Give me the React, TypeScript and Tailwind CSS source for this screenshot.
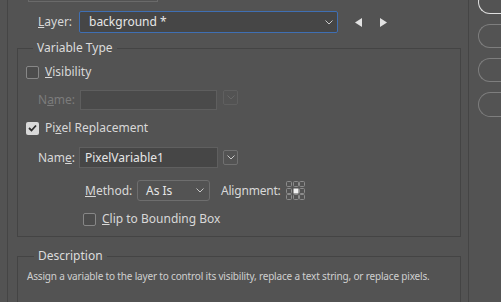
import React from "react";

const Chevron = ({ color = "#c8c8c8" }: { color?: string }) => (
  <svg width="8" height="5" viewBox="0 0 8 5" fill="none">
    <polyline points="0.5,0.5 4,4 7.5,0.5" stroke={color} strokeWidth="1" />
  </svg>
);

const CheckBox = ({ checked = false }: { checked?: boolean }) =>
  checked ? (
    <span className="flex h-[13px] w-[13px] items-center justify-center rounded-[2px] bg-[#d9d9d9]">
      <svg width="9" height="8" viewBox="0 0 9 8" fill="none">
        <polyline points="1,4 3.5,6.5 8,1.5" stroke="#2e2e2e" strokeWidth="1.8" />
      </svg>
    </span>
  ) : (
    <span className="h-[13px] w-[13px] rounded-[2px] border border-[#878787] bg-[#4c4c4c]" />
  );

const MiniDrop = ({ disabled = false }: { disabled?: boolean }) => (
  <span
    className={`flex h-[15px] w-[15px] items-center justify-center rounded-[2px] border ${
      disabled ? "border-[#5f5f5f]" : "border-[#707070]"
    }`}
  >
    <Chevron color={disabled ? "#666666" : "#c8c8c8"} />
  </span>
);

// 3x3 anchor picker, centre selected
const AlignIcon = () => (
  <svg width="19" height="19" viewBox="0 0 19 19" fill="none">
    {[0, 7, 13].map((x) =>
      [0, 7, 13].map((y) =>
        x === 7 && y === 7 ? (
          <rect key={`${x}-${y}`} x={x + 0.5} y={y + 0.5} width="5" height="5" fill="#f0f0f0" />
        ) : (
          <rect
            key={`${x}-${y}`}
            x={x + 0.5}
            y={y + 0.5}
            width="5"
            height="5"
            stroke="#8c8c8c"
            strokeWidth="1"
            rx="1"
          />
        )
      )
    )}
  </svg>
);

export default function App() {
  return (
    <div
      className="flex h-[302px] w-[501px] overflow-hidden bg-[#535353] text-[12px] text-[#d8d8d8]"
      style={{ fontFamily: '"Noto Sans", "Open Sans", sans-serif' }}
    >
      <div className="w-[7px] shrink-0" />
      <div className="flex w-[462px] shrink-0 flex-col border-x border-[#454545]">
        {/* stub of the control above */}
        <div className="ml-[20px] h-[2px] w-[130px] border-x border-b border-[#6a6a6a]" />

        {/* layer row */}
        <div className="mt-[9px] flex h-[22px] items-center">
          <span className="ml-[30px] w-[41px]">
            <u>L</u>ayer:
          </span>
          <div className="flex h-[22px] w-[259px] items-center justify-between rounded-[2px] border border-[#3f6fb3] bg-[#464646] pl-[9px] pr-[4px] text-[#e6e6e6]">
            <span>background *</span>
            <Chevron />
          </div>
          <svg className="ml-[17px]" width="7" height="9" viewBox="0 0 7 9">
            <polygon points="7,0 7,9 0,4.5" fill="#e2e2e2" />
          </svg>
          <svg className="ml-[18px]" width="7" height="9" viewBox="0 0 7 9">
            <polygon points="0,0 0,9 7,4.5" fill="#e2e2e2" />
          </svg>
        </div>

        {/* variable type */}
        <fieldset className="ml-[9px] mt-[7px] w-[444px] border border-[#444444] pb-[7px]">
          <legend className="ml-[15px] px-[4px] leading-[16px] text-[#dcdcdc]">Variable Type</legend>
          <div className="mt-[6px] flex h-[20px] items-center gap-[6px] pl-[8px]">
            <CheckBox />
            <span>
              <u>V</u>isibility
            </span>
          </div>
          <div className="mt-[8px] flex h-[20px] items-center pl-[20px] text-[#7c7c7c]">
            <span className="w-[42px]">
              N<u>a</u>me:
            </span>
            <div className="h-[20px] w-[137px] border border-[#5e5e5e] bg-[#4a4a4a]" />
            <span className="ml-[6px] self-start">
              <MiniDrop disabled />
            </span>
          </div>
          <div className="mt-[8px] flex h-[20px] items-center gap-[6px] pl-[8px]">
            <CheckBox checked />
            <span>
              Pi<u>x</u>el Replacement
            </span>
          </div>
          <div className="mt-[9px] flex h-[21px] items-center pl-[20px]">
            <span className="w-[41px]">
              Nam<u>e</u>:
            </span>
            <div className="flex h-[21px] w-[139px] items-center border border-[#5f5f5f] bg-[#464646] pl-[5px] text-[#e6e6e6]">
              PixelVariable1
            </div>
            <span className="ml-[5px]">
              <MiniDrop />
            </span>
          </div>
          <div className="mt-[12px] flex h-[21px] items-center pl-[67px]">
            <span className="w-[52px]">
              <u>M</u>ethod:
            </span>
            <div className="flex h-[21px] w-[73px] items-center justify-between rounded-[3px] border border-[#6e6e6e] pl-[8px] pr-[5px] text-[#e6e6e6]">
              <span>As Is</span>
              <Chevron />
            </div>
            <span className="ml-[11px] tracking-[-0.2px]">Alignment:</span>
            <span className="ml-[5px]">
              <AlignIcon />
            </span>
          </div>
          <div className="mt-[8px] flex h-[20px] items-center gap-[6px] pl-[65px]">
            <CheckBox />
            <span>
              <u>C</u>lip to Bounding Box
            </span>
          </div>
        </fieldset>

        {/* description */}
        <fieldset className="ml-[9px] mt-[11px] w-[444px] grow border border-b-0 border-[#444444]">
          <legend className="ml-[16px] px-[4px] leading-[16px] text-[#dcdcdc]">Description</legend>
          <p className="mt-[4px] whitespace-nowrap pl-[9px] text-[10px] leading-[16px] tracking-[-0.17px] text-[#cfcfcf]">
            Assign a variable to the layer to control its visibility, replace a text string, or replace pixels.
          </p>
        </fieldset>
      </div>

      {/* right side buttons */}
      <div className="flex flex-col gap-[10px] pl-[9px]">
        <div className="-mt-[10px] h-[24px] w-[40px] rounded-l-full border border-r-0 border-[#e0e0e0]" />
        <div className="h-[24px] w-[40px] rounded-l-full border border-r-0 border-[#7e7e7e]" />
        <div className="h-[24px] w-[40px] rounded-l-full border border-r-0 border-[#7e7e7e]" />
        <div className="h-[25px] w-[40px] rounded-l-full border border-r-0 border-[#7e7e7e]" />
      </div>
    </div>
  );
}
